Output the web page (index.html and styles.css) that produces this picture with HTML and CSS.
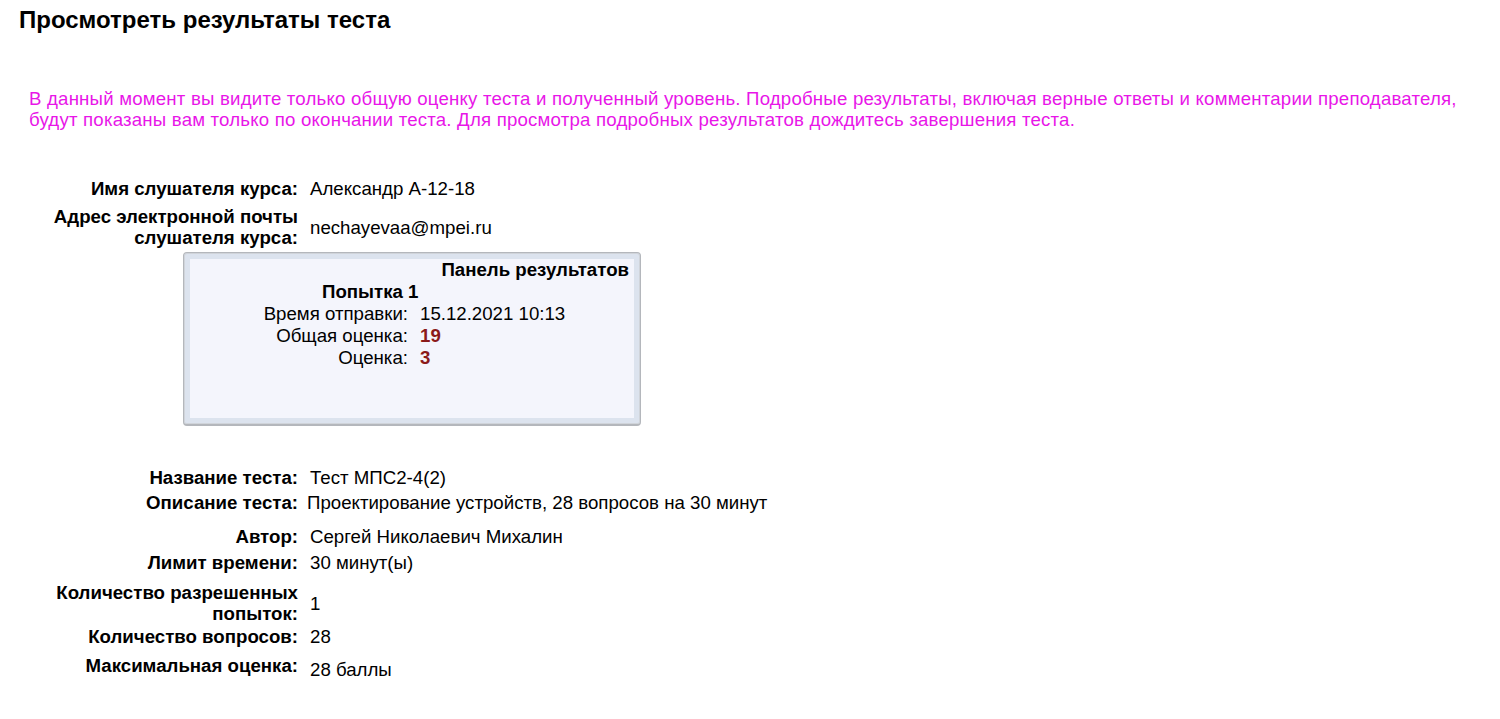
FILE: index.html
```html
<!DOCTYPE html>
<html lang="ru">
<head>
<meta charset="utf-8">
<title>Просмотреть результаты теста</title>
<link rel="stylesheet" href="styles.css">
</head>
<body>
<div class="page">
  <h1 class="title">Просмотреть результаты теста</h1>
  <p class="notice">В данный момент вы видите только общую оценку теста и полученный уровень. Подробные результаты, включая верные ответы и комментарии преподавателя, будут показаны вам только по окончании теста. Для просмотра подробных результатов дождитесь завершения теста.</p>

  <div class="info info-top">
    <div class="row"><div class="lbl">Имя слушателя курса:</div><div class="val">Александр А-12-18</div></div>
    <div class="row row-mid gap-7"><div class="lbl">Адрес электронной почты слушателя курса:</div><div class="val">nechayevaa@mpei.ru</div></div>
  </div>

  <div class="panel">
    <div class="panel-inner">
      <div class="panel-title">Панель результатов</div>
      <div class="attempt">Попытка 1</div>
      <div class="prow"><div class="plbl">Время отправки:</div><div class="pval">15.12.2021 10:13</div></div>
      <div class="prow"><div class="plbl">Общая оценка:</div><div class="pval score">19</div></div>
      <div class="prow"><div class="plbl">Оценка:</div><div class="pval score">3</div></div>
    </div>
  </div>

  <div class="info info-bottom">
    <div class="row"><div class="lbl">Название теста:</div><div class="val">Тест МПС2-4(2)</div></div>
    <div class="row gap-4"><div class="lbl">Описание теста:</div><div class="val val-shift">Проектирование устройств, 28 вопросов на 30 минут</div></div>
    <div class="row gap-13"><div class="lbl">Автор:</div><div class="val">Сергей Николаевич Михалин</div></div>
    <div class="row gap-5"><div class="lbl">Лимит времени:</div><div class="val">30 минут(ы)</div></div>
    <div class="row row-mid gap-9"><div class="lbl">Количество разрешенных попыток:</div><div class="val">1</div></div>
    <div class="row gap-2"><div class="lbl">Количество вопросов:</div><div class="val">28</div></div>
    <div class="row gap-8"><div class="lbl">Максимальная оценка:</div><div class="val val-low">28 баллы</div></div>
  </div>
</div>
</body>
</html>
```
FILE: styles.css
```css
html, body {
  margin: 0;
  padding: 0;
  background: #ffffff;
}
body {
  font-family: Arial, "Liberation Sans", sans-serif;
  color: #000000;
  font-size: 18.67px;
}
.page {
  padding: 6px 19px 0 19px;
}
.title {
  margin: 0;
  font-size: 24px;
  font-weight: bold;
  line-height: 28px;
}
.notice {
  margin: 54px 0 0 10px;
  color: #e816e8;
  line-height: 21px;
  letter-spacing: 0.01em;
}
.info {
  display: flex;
  flex-direction: column;
}
.info-top {
  margin-top: 48px;
}
.row {
  display: flex;
  align-items: flex-start;
  line-height: 21px;
}
.row-mid {
  align-items: center;
}
.gap-2 { margin-top: 2px; }
.gap-4 { margin-top: 4px; }
.gap-5 { margin-top: 5px; }
.gap-7 { margin-top: 7px; }
.gap-8 { margin-top: 8px; }
.gap-9 { margin-top: 9px; }
.gap-13 { margin-top: 13px; }
.lbl {
  width: 260px;
  margin-left: 19px;
  text-align: right;
  font-weight: bold;
  flex: none;
}
.val {
  margin-left: 12px;
}
.val-shift {
  margin-left: 9px;
}
.val-low {
  padding-top: 4px;
}
.panel {
  margin: 4px 0 0 164px;
  width: 458px;
  height: 174px;
  box-sizing: border-box;
  border: 1px solid #b4b7bc;
  border-bottom-width: 2px;
  border-radius: 4px;
  background: #dce3ee;
  padding: 6px;
  box-shadow: inset 0 0 0 1px #d0d4da;
}
.panel-inner {
  background: #f4f5fc;
  height: 100%;
  box-sizing: border-box;
  padding: 0 5px 0 0;
}
.panel-title {
  text-align: right;
  font-weight: bold;
  line-height: 22px;
}
.attempt {
  font-weight: bold;
  line-height: 22px;
  padding-left: 132px;
}
.prow {
  display: flex;
  line-height: 22px;
}
.plbl {
  width: 218px;
  text-align: right;
  flex: none;
}
.pval {
  margin-left: 12px;
}
.score {
  color: #8b1a1a;
  font-weight: bold;
}
.info-bottom {
  margin-top: 41px;
}
```
